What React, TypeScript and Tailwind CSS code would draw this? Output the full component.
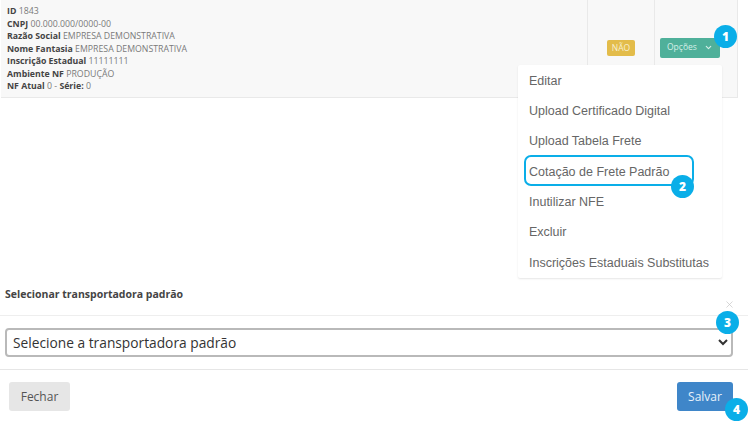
import { X, ChevronDown } from 'lucide-react';

const MENU_ITEMS = [
  'Editar',
  'Upload Certificado Digital',
  'Upload Tabela Frete',
  'Cotação de Frete Padrão',
  'Inutilizar NFE',
  'Excluir',
  'Inscrições Estaduais Substitutas',
];

const DETAILS: [string, string][] = [
  ['ID', '1843'],
  ['CNPJ', '00.000.000/0000-00'],
  ['Razão Social', 'EMPRESA DEMONSTRATIVA'],
  ['Nome Fantasia', 'EMPRESA DEMONSTRATIVA'],
  ['Inscrição Estadual', '11111111'],
  ['Ambiente NF', 'PRODUÇÃO'],
];

// Numbered callout dot, laid over the screenshot annotations.
function Marker({ n, className }: { n: number; className: string }) {
  return (
    <span
      className={`absolute flex h-[23px] w-[23px] items-center justify-center rounded-full bg-[#0aaee8] font-['Open_Sans',sans-serif] text-[12px] font-extrabold text-white ${className}`}
    >
      {n}
    </span>
  );
}

export default function App() {
  return (
    <div className="relative h-[426px] w-[748px] overflow-hidden bg-white font-['Open_Sans',sans-serif]">
      {/* Company row */}
      <div className="ml-[1px] flex h-[98px] w-[737px] border-r border-b border-[#e9e9e9] bg-[#f8f8f8]">
        <div className="flex-1 pt-[5px] pl-[6px] text-[8.75px] leading-[12.5px] text-[#7a7a7a]">
          {DETAILS.map(([label, value]) => (
            <div key={label}>
              <b className="text-[#444]">{label}</b> {value}
            </div>
          ))}
          <div>
            <b className="text-[#444]">NF Atual</b> 0 - <b className="text-[#444]">Série:</b> 0
          </div>
        </div>
        <div className="flex w-[67px] items-center justify-center border-l border-[#e9e9e9] pb-[2px]">
          <span className="rounded-[2px] bg-[#e3bc4a] px-[5px] py-[3px] text-[8.5px] leading-[10px] text-[#f8f0d0]">
            NÃO
          </span>
        </div>
        <div className="flex w-[83px] items-center justify-center border-l border-[#e9e9e9] pb-[2px]">
          <span className="mr-[12px] flex h-[20px] w-[60px] items-center justify-between rounded-[2px] bg-[#4fb09a] px-[7px] text-[8.5px] text-[#d6efe8]">
            Opções
            <ChevronDown size={9} strokeWidth={3} />
          </span>
        </div>
      </div>

      {/* Modal */}
      <div className="mt-[189px]">
        <div className="flex h-[28px] items-start justify-between pl-[5px]">
          <span className="text-[10.5px] leading-[14px] font-bold text-[#444]">
            Selecionar transportadora padrão
          </span>
          <X size={11} strokeWidth={1.5} className="mt-[12px] mr-[13px] text-[#c4c4c4]" />
        </div>
        <div className="border-t border-[#eeeeee] px-[5px] pt-[12px] pb-[12px]">
          <select className="h-[29px] w-[728px] rounded-[4px] border-2 border-[#b9b9b9] bg-white pl-[2px] text-[13.75px] text-[#333]">
            <option>Selecione a transportadora padrão</option>
          </select>
        </div>
        <div className="flex justify-between border-t border-[#e6e6e6] pt-[12px] pr-[15px] pl-[9px]">
          <button className="h-[29px] w-[61px] rounded-[3px] bg-[#e6e6e6] text-[12px] text-[#555]">
            Fechar
          </button>
          <button className="h-[29px] w-[56px] rounded-[3px] bg-[#3f86c9] text-[12px] text-[#e8f1fa]">
            Salvar
          </button>
        </div>
      </div>

      {/* Opções dropdown */}
      <ul className="absolute top-[65px] left-[518px] w-[204px] rounded-[2px] bg-white pt-[1px] font-['Liberation_Sans',sans-serif] text-[12.5px] text-[#666] shadow-[0_1px_2px_rgba(0,0,0,0.1)]">
        {MENU_ITEMS.map((item) => (
          <li key={item} className="flex h-[30.3px] items-center pl-[11px]">
            {item}
          </li>
        ))}
      </ul>

      {/* Annotations */}
      <div className="absolute top-[155px] left-[524px] h-[31px] w-[170px] rounded-[7px] border-2 border-[#0aaee8]" />
      <Marker n={1} className="top-[25px] left-[714px]" />
      <Marker n={2} className="top-[175px] left-[671px]" />
      <Marker n={3} className="top-[311px] left-[716px]" />
      <Marker n={4} className="top-[398px] left-[725px]" />
    </div>
  );
}
